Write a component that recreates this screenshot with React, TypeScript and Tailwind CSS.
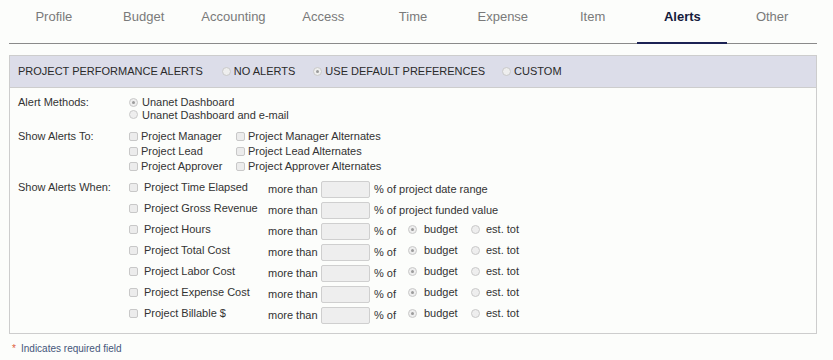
import React from "react";

const tabs = ["Profile", "Budget", "Accounting", "Access", "Time", "Expense", "Item", "Alerts", "Other"];

function Radio({ checked = false }: { checked?: boolean }) {
  return (
    <span className="inline-flex w-[9px] h-[9px] shrink-0 items-center justify-center rounded-full border border-[#c9c9c9] bg-[#eeeeee]">
      {checked && <span className="block w-[3px] h-[3px] rounded-full bg-[#9b9b9b]" />}
    </span>
  );
}

function Check() {
  return <span className="inline-block w-[9px] h-[9px] shrink-0 rounded-[2px] border border-[#c8c8c8] bg-[#ececec]" />;
}

function Input() {
  return <span className="block w-[49px] h-[17px] shrink-0 rounded-[2px] border border-[#cfcfcf] bg-[#eeeeee]" />;
}

type Row = { name: string; suffix?: string };
const rows: Row[] = [
  { name: "Project Time Elapsed", suffix: "% of project date range" },
  { name: "Project Gross Revenue", suffix: "% of project funded value" },
  { name: "Project Hours" },
  { name: "Project Total Cost" },
  { name: "Project Labor Cost" },
  { name: "Project Expense Cost" },
  { name: "Project Billable $" },
];

export default function App() {
  return (
    <div
      className="w-[833px] h-[360px] overflow-hidden bg-[#fcfdfb] text-[#333333]"
      style={{ fontFamily: '"Liberation Sans", Arial, sans-serif' }}
    >
      {/* Tabs */}
      <div className="ml-[9px] w-[808px] h-[44px] flex border-b border-[#8a8a8a]">
        {tabs.map((t) => {
          const active = t === "Alerts";
          return (
            <div key={t} className="relative flex-1 flex justify-center pt-[9px]">
              <span
                className={
                  "text-[13px] leading-[16px] " +
                  (active ? "font-bold text-[#141a3c]" : "text-[#7a7a7a]")
                }
              >
                {t}
              </span>
              {active && <span className="absolute left-0 right-0 bottom-[-1px] h-[2px] bg-[#1c2254]" />}
            </div>
          );
        })}
      </div>

      {/* Panel */}
      <div className="ml-[9px] mt-[11px] w-[808px] border border-[#cdcdcd]">
        <div className="h-[32px] bg-[#dcdde9] border-b border-[#cdcdcd] flex items-center pl-[8px] text-[11px] leading-[13px] text-[#2a2a2a]">
          <span>PROJECT PERFORMANCE ALERTS</span>
          <span className="ml-[19px] flex items-center gap-[3px]">
            <Radio />
            <span>NO ALERTS</span>
          </span>
          <span className="ml-[18px] flex items-center gap-[3px]">
            <Radio checked />
            <span>USE DEFAULT PREFERENCES</span>
          </span>
          <span className="ml-[17px] flex items-center gap-[3px]">
            <Radio />
            <span>CUSTOM</span>
          </span>
        </div>

        <div className="pl-[8px] pt-[8px] pb-[7px] text-[11px]">
          {/* Alert Methods */}
          <div className="flex leading-[12.5px]">
            <div className="w-[111px]">Alert Methods:</div>
            <div className="flex flex-col">
              <div className="flex items-center gap-[4px]">
                <Radio checked />
                <span>Unanet Dashboard</span>
              </div>
              <div className="flex items-center gap-[4px]">
                <Radio />
                <span>Unanet Dashboard and e-mail</span>
              </div>
            </div>
          </div>

          {/* Show Alerts To */}
          <div className="flex mt-[8px] leading-[15px]">
            <div className="w-[111px]">Show Alerts To:</div>
            <div className="grid grid-cols-[107px_auto]">
              {[
                "Project Manager",
                "Project Manager Alternates",
                "Project Lead",
                "Project Lead Alternates",
                "Project Approver",
                "Project Approver Alternates",
              ].map((l) => (
                <div key={l} className="flex items-center gap-[3px]">
                  <Check />
                  <span>{l}</span>
                </div>
              ))}
            </div>
          </div>

          {/* Show Alerts When */}
          <div className="flex mt-[5px]">
            <div className="w-[111px] pt-[2px] leading-[13px]">Show Alerts When:</div>
            <div className="flex flex-col">
              {rows.map((r) => (
                <div key={r.name} className="h-[21px] flex items-center">
                  <div className="w-[15px] self-start pt-[4px] flex">
                    <Check />
                  </div>
                  <div className="w-[124px] self-start pt-[2px] leading-[13px] whitespace-nowrap">{r.name}</div>
                  <div className="w-[53px] leading-[13px]">more than</div>
                  <Input />
                  {r.suffix ? (
                    <div className="ml-[4px] leading-[13px]">{r.suffix}</div>
                  ) : (
                    <>
                      <div className="ml-[4px] w-[34px] leading-[13px]">% of</div>
                      <div className="self-start pt-[4px] flex">
                        <Radio checked />
                      </div>
                      <div className="ml-[7px] w-[47px] self-start pt-[2px] leading-[13px]">budget</div>
                      <div className="self-start pt-[4px] flex">
                        <Radio />
                      </div>
                      <div className="ml-[6px] self-start pt-[2px] leading-[13px]">est. tot</div>
                    </>
                  )}
                </div>
              ))}
            </div>
          </div>
        </div>
      </div>

      {/* Footer */}
      <div className="mt-[9px] pl-[12px] flex items-start text-[10px] leading-[12px]">
        <span className="text-[#e0603c] w-[9px]">*</span>
        <span className="text-[#45567a]">Indicates required field</span>
      </div>
    </div>
  );
}
